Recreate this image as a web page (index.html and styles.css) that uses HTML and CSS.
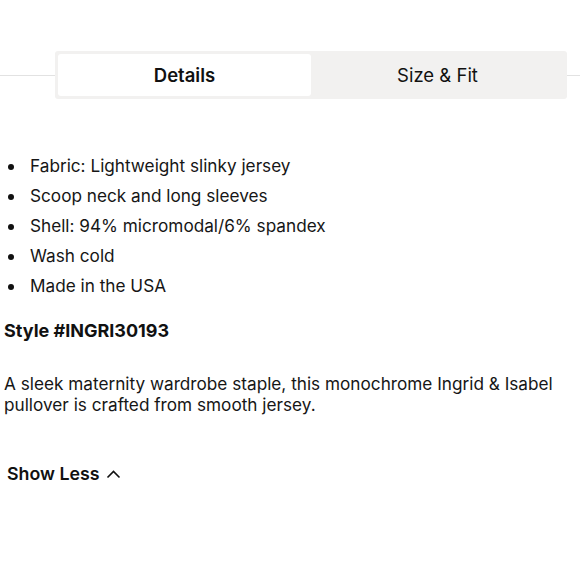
FILE: index.html
```html
<!DOCTYPE html>
<html>
<head>
<meta charset="utf-8">
<link rel="stylesheet" href="styles.css">
</head>
<body>
<div class="tabs-row">
  <div class="rule rule-left"></div>
  <div class="tabs">
    <div class="tab active">Details</div>
    <div class="tab">Size &amp; Fit</div>
  </div>
  <div class="rule"></div>
</div>
<ul class="bullets">
  <li>Fabric: Lightweight slinky jersey</li>
  <li>Scoop neck and long sleeves</li>
  <li>Shell: 94% micromodal/6% spandex</li>
  <li>Wash cold</li>
  <li>Made in the USA</li>
</ul>
<div class="style">Style #INGRI30193</div>
<p class="desc">A sleek maternity wardrobe staple, this monochrome Ingrid &amp; Isabel pullover is crafted from smooth jersey.</p>
<div class="toggle">Show Less <svg class="chev" width="15" height="10" viewBox="0 0 15 10"><path d="M1.5 8.5 L7.5 2.5 L13.5 8.5" fill="none" stroke="#111" stroke-width="1.6"/></svg></div>
</body>
</html>
```
FILE: styles.css
```css
html, body { margin: 0; padding: 0; background: #fff; }
body { font-family: "Inter", "Liberation Sans", sans-serif; color: #161616; width: 580px; }
.tabs-row { display: flex; align-items: center; padding-top: 51px; }
.rule { flex: 1; height: 1px; background: #e2e2e2; }
.rule-left { flex: 0 0 55px; }
.tabs { width: 512px; height: 48px; box-sizing: border-box; padding: 3px; background: #f2f1f0; border-radius: 3px; display: flex; }
.tab { flex: 1; display: flex; align-items: center; justify-content: center; font-size: 18.5px; color: #111; }
.tab.active { background: #fff; border-radius: 3px; font-weight: 600; }
.bullets { margin: 52px 0 0; padding: 0; list-style: none; font-size: 17.2px; line-height: 30px; }
.bullets li { display: flex; align-items: center; }
.bullets li::before { content: ""; flex: 0 0 6px; height: 6px; border-radius: 50%; background: #111; margin: 1px 16px 0 8px; }
.style { font-weight: 700; font-size: 18px; margin: 15px 0 0 4px; line-height: 30px; color: #111; }
.desc { margin: 27px 0 0 4px; font-size: 17.2px; line-height: 21px; }
.toggle { margin: 48px 0 0 7px; font-size: 17.8px; font-weight: 600; display: flex; align-items: center; gap: 6px; color: #111; }
```
